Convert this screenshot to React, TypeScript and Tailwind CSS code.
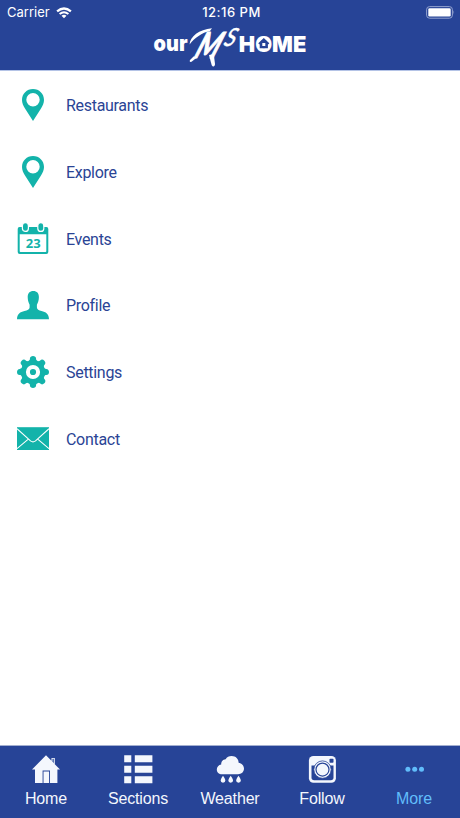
import React from "react";

interface MenuItem {
    label: string;
    icon: React.ReactNode;
}

interface TabItem {
    label: string;
    icon: React.ReactNode;
    active?: boolean;
}

const PinIcon = () => (
    <svg viewBox="0 0 32 32" className="w-8 h-8" fill="currentColor">
        <path
            fillRule="evenodd"
            d="M16 0C9.800 0 5 4.800 5 10.900C5 14.200 6.400 16.800 8 19.500L16 32L24 19.500C25.600 16.800 27 14.200 27 10.900C27 4.800 22.200 0 16 0ZM16 4.100A6.700 6.700 0 1 1 16 17.500A6.700 6.700 0 1 1 16 4.100Z"
        />
    </svg>
);

const CalendarIcon = () => (
    <svg viewBox="0 0 32 32" className="w-8 h-8">
        <path
            fill="currentColor"
            fillRule="evenodd"
            d="M2.500 4H29.500Q31.300 4 31.300 6V29Q31.300 31 29.300 31H2.700Q.7 31 .7 29V6Q.7 4 2.500 4ZM2.700 11.200V28.200Q2.700 29 3.500 29H28.500Q29.300 29 29.300 28.200V11.200Z"
        />
        <g fill="currentColor" stroke="#fff" strokeWidth="1.200">
            <rect x="5.400" y="-.3" width="6" height="8.700" rx="3" />
            <rect x="20.800" y="-.3" width="6" height="8.700" rx="3" />
        </g>
        <text
            x="16.200"
            y="25.200"
            textAnchor="middle"
            fill="currentColor"
            className="font-['Noto_Sans',sans-serif] font-bold text-[13px]"
        >
            23
        </text>
    </svg>
);

const ProfileIcon = () => (
    <svg viewBox="0 0 32 32" className="w-8 h-8" fill="currentColor">
        <path d="M16.300 2C12.700 2 10.700 4.300 10.700 8C10.700 11.300 11.500 13.700 12.600 15.700V18.500C12.500 20.400 10.400 21.200 7.500 22C3.200 23.200 .2 24.500 0 30.200H32C31.800 24.500 28.800 23.200 24.500 22C21.800 21.200 20 20.400 19.900 18.500V15.700C21.100 13.700 21.900 11.300 21.900 8C21.900 4.300 19.900 2 16.300 2Z" />
    </svg>
);

const teeth = [0, 45, 90, 135, 180, 225, 270, 315];

const GearIcon = () => (
    <svg viewBox="0 0 32 32" className="w-8 h-8">
        <g fill="currentColor">
            {teeth.map((angle) => (
                <path
                    key={angle}
                    transform={`rotate(${angle} 16 16)`}
                    d="M11.500 5C12.700 4.300 12.900 3.600 12.900 2.700C12.900 .9 14.300 0 16 0S19.100 .9 19.100 2.700C19.100 3.600 19.300 4.300 20.500 5Z"
                />
            ))}
            <circle cx="16" cy="16" r="12.100" />
        </g>
        <circle cx="16" cy="16" r="5.100" fill="none" stroke="#fff" strokeWidth="4" />
    </svg>
);

const EnvelopeIcon = () => (
    <svg viewBox="0 0 32 32" className="w-8 h-8" fill="none">
        <rect y="4.200" width="32" height="22.800" fill="currentColor" />
        <path
            d="M0 5.700L13.500 17.900Q16 19.900 18.500 17.900L32 5.700M0 25.700L11.300 16.200M32 25.700L20.700 16.200"
            stroke="#fff"
            strokeWidth="1.100"
        />
    </svg>
);

const HomeIcon = () => (
    <svg viewBox="0 0 28 28" className="w-7 h-7" fill="currentColor">
        <path d="M14 .3L19.500 5.800V3H22.800V9.300L28 14.500H25.400V28H18V15.500H10.600V28H3V14.500H0Z" />
        <path d="M11.500 16.500H17.100V28H11.500Z" />
        <path d="M20.300 3.800H22V8.300L20.300 6.600Z" fill="#6079b5" />
    </svg>
);

const SectionsIcon = () => (
    <svg viewBox="0 0 28 28" className="w-7 h-7 overflow-visible" fill="currentColor">
        <path d="M.2 .2H7.300V7.200H.2ZM10.800 .2H28.400V7.200H10.800ZM.2 10.800H7.300V17.800H.2ZM10.800 10.800H28.400V17.800H10.800ZM.2 21.200H7.300V28.200H.2ZM10.800 21.200H28.400V28.200H10.800Z" />
    </svg>
);

const WeatherIcon = () => (
    <svg viewBox="0 0 28 28" className="w-7 h-7" fill="currentColor">
        <path d="M6 19.300C2.900 19.300 .8 17.200 .8 14.500C.8 11.800 2.700 9.900 5.200 9.500C5 6.400 7 4.200 9.700 4.200C10.800 2.200 13 1 15.600 1C19.800 1 22.700 4 22.600 7.800C25.700 8.300 28 10.500 28 13.600C28 17 25.400 19.300 22 19.300Z" />
        <path
            d="M6 5.200Q7.300 3.700 9 3.700"
            fill="none"
            stroke="#263c72"
            strokeWidth=".7"
        />
        <path d="M7 20.800Q9.400 24 9.400 25.300A2.400 2.400 0 0 1 4.600 25.300Q4.600 24 7 20.800ZM14.700 20.800Q17.100 24 17.100 25.300A2.400 2.400 0 0 1 12.300 25.300Q12.300 24 14.700 20.800ZM22.500 20.800Q24.900 24 24.900 25.300A2.400 2.400 0 0 1 20.100 25.300Q20.100 24 22.500 20.800Z" />
    </svg>
);

const CameraIcon = () => (
    <svg viewBox="0 0 28 28" className="w-7 h-7">
        <rect x=".9" y="1" width="27" height="26.800" rx="4.500" fill="currentColor" />
        <path d="M3.500 10.500H25.500V22.600Q25.500 25.300 22.800 25.300H6.200Q3.500 25.300 3.500 22.600Z" fill="#274497" />
        <rect x="21.500" y="3.800" width="4" height="4" rx=".8" fill="#274497" />
        <circle cx="14.500" cy="14.600" r="8.700" fill="currentColor" stroke="#274497" strokeWidth=".8" />
        <circle cx="14.500" cy="14.600" r="6.500" fill="none" stroke="#274497" strokeWidth="1.200" />
    </svg>
);

const MoreIcon = () => (
    <svg viewBox="0 0 28 28" className="w-7 h-7" fill="currentColor">
        <circle cx="7.900" cy="14.300" r="2.500" />
        <circle cx="14.700" cy="14.300" r="2.500" />
        <circle cx="21.500" cy="14.300" r="2.500" />
    </svg>
);

const WifiIcon = () => (
    <svg viewBox="0 0 16 12" className="w-4 h-3" fill="none" stroke="#fff">
        <path d="M1.100 4.400Q8 -1.400 14.900 4.400" strokeWidth="2.300" />
        <path d="M3.600 7.100Q8 3.500 12.400 7.100" strokeWidth="2" />
        <path d="M5.500 8.800Q8 6.900 10.500 8.800L8 11.300Z" fill="#fff" stroke="none" />
    </svg>
);

const BatteryIcon = () => (
    <svg viewBox="0 0 29 13" className="w-[29px] h-[13px]">
        <rect x=".6" y=".6" width="25.800" height="11.600" rx="3" fill="none" stroke="#93a3cf" />
        <rect x="2.300" y="2.200" width="22.400" height="8.400" rx="1.300" fill="#fff" />
        <path d="M27.500 4.200Q29 6.300 27.500 8.400Z" fill="#93a3cf" />
    </svg>
);

const Logo = () => (
    <svg viewBox="150 24 160 46" className="w-40 h-[46px] overflow-visible" fill="#fff">
        <text
            x="153.600"
            y="50.500"
            textLength="34"
            lengthAdjust="spacingAndGlyphs"
            className="font-['Inter',sans-serif] font-black text-[22px]"
        >
            our
        </text>
        <text
            transform="translate(192 57.500) skewX(-27)"
            textLength="23"
            lengthAdjust="spacingAndGlyphs"
            stroke="#fff"
            strokeWidth="1.200"
            className="font-['Lato',sans-serif] font-bold text-[36px]"
        >
            M
        </text>
        {/* brush strokes around the M */}
        <path d="M189.600 44.500C190 36.500 199 29.500 212 28.300L210 31C202 32.500 194.500 38 189.600 44.500Z" />
        <path d="M193.500 56.500L190 60C189 62.300 191 62.500 192.500 61L197.500 57Z" />
        <path d="M209 55L211.500 64.500C212.500 67.500 215 67 215 64L213.800 54Z" />
        <text
            transform="translate(222 46) skewX(-25)"
            textLength="11"
            lengthAdjust="spacingAndGlyphs"
            stroke="#fff"
            strokeWidth=".3"
            className="font-['Lato',sans-serif] font-medium text-[25px]"
        >
            S
        </text>
        <text
            x="238.800"
            y="51.500"
            textLength="67.500"
            lengthAdjust="spacingAndGlyphs"
            className="font-['Inter',sans-serif] font-black text-[22px]"
        >
            HOME
        </text>
        {/* house inside the O */}
        <path d="M263.800 38L269.300 43.300L268.500 44.200H267.900V48.200H259.700V44.200H259.100L258.300 43.300Z" fill="#274497" />
        <rect x="262.300" y="43" width="3" height="3" />
    </svg>
);

const menuItems: MenuItem[] = [
    { label: "Restaurants", icon: <PinIcon /> },
    { label: "Explore", icon: <PinIcon /> },
    { label: "Events", icon: <CalendarIcon /> },
    { label: "Profile", icon: <ProfileIcon /> },
    { label: "Settings", icon: <GearIcon /> },
    { label: "Contact", icon: <EnvelopeIcon /> },
];

const tabs: TabItem[] = [
    { label: "Home", icon: <HomeIcon /> },
    { label: "Sections", icon: <SectionsIcon /> },
    { label: "Weather", icon: <WeatherIcon /> },
    { label: "Follow", icon: <CameraIcon /> },
    { label: "More", icon: <MoreIcon />, active: true },
];

export default function App() {
    return (
        <div className="flex flex-col w-full h-screen bg-white overflow-hidden">
            {/* Header */}
            <header className="h-[71px] shrink-0 bg-[#274497] border-b border-[#b4c3e6]">
                <div className="grid grid-cols-3 items-center h-6 pl-[7px] pr-[5px] text-white font-['Inter',sans-serif] text-[13px]">
                    <div className="flex items-center gap-1.5 pt-[1px]">
                        <span>Carrier</span>
                        <WifiIcon />
                    </div>
                    <span className="pt-[1px] pl-[1px] text-center font-medium whitespace-nowrap tracking-[0.500px]">
                        12:16 PM
                    </span>
                    <div className="flex justify-end">
                        <BatteryIcon />
                    </div>
                </div>
                <div className="flex justify-center">
                    <Logo />
                </div>
            </header>

            {/* Menu */}
            <main className="flex-1 pt-[1px]">
                {menuItems.map((item) => (
                    <button
                        key={item.label}
                        className="flex items-center gap-[17px] w-full h-[66.670px] pl-[17px] text-left text-[#13b3aa]"
                    >
                        {item.icon}
                        <span className="pt-[2px] font-['Roboto',sans-serif] text-base tracking-[-0.300px] text-[#2a4495]">
                            {item.label}
                        </span>
                    </button>
                ))}
            </main>

            {/* Tab bar */}
            <nav className="grid grid-cols-5 h-[73px] shrink-0 bg-[#274497] border-t border-[#a3afd0]">
                {tabs.map((tab) => (
                    <button
                        key={tab.label}
                        className={`flex flex-col items-center pt-[9px] ${tab.active ? "text-[#61bdfb]" : "text-[#f4f7fd]"}`}
                    >
                        {tab.icon}
                        <span className="mt-[6px] font-['Liberation_Sans',sans-serif] text-base leading-5 tracking-[-0.150px]">
                            {tab.label}
                        </span>
                    </button>
                ))}
            </nav>
        </div>
    );
}
